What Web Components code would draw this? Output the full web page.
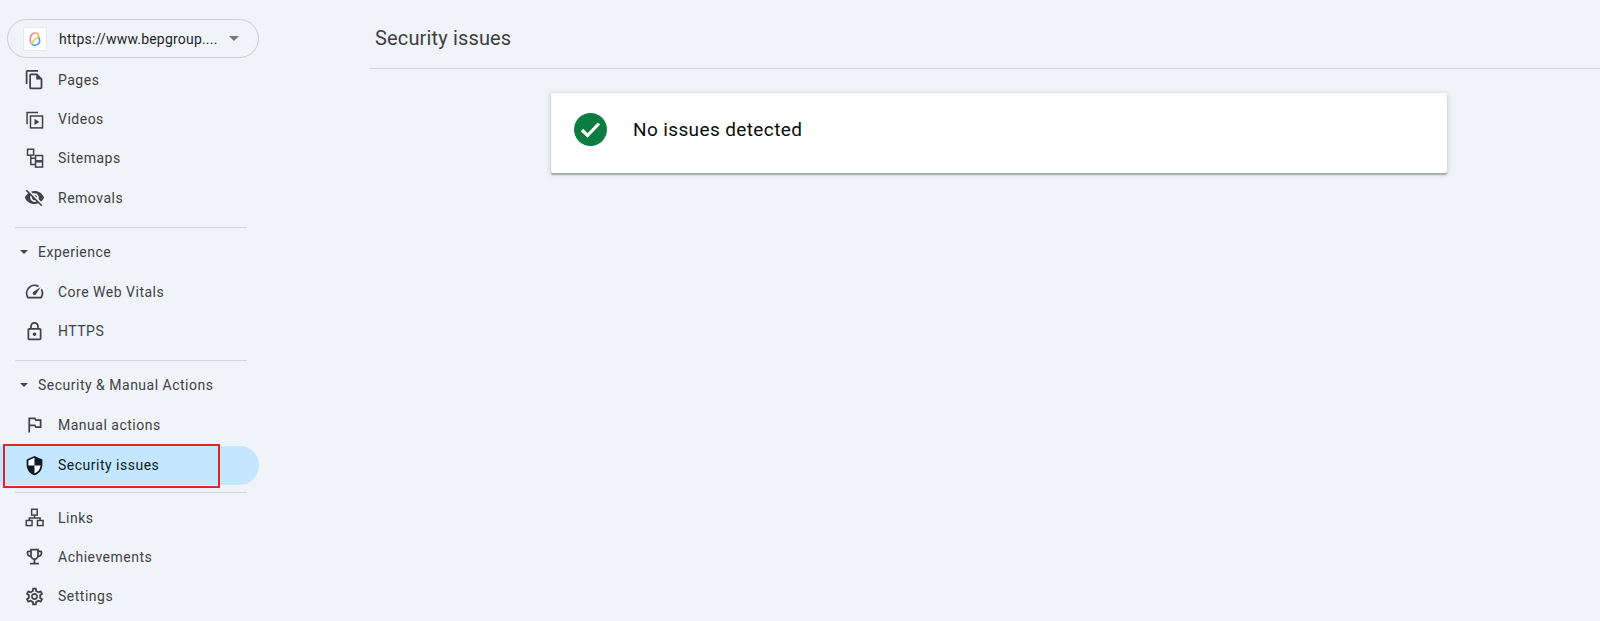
<!DOCTYPE html>
<html>
<head>
<meta charset="utf-8">
<title>Security issues</title>
<style>
  html, body { margin: 0; height: 100%; }
  body { background: #f0f4f9; font-family: Roboto, "Liberation Sans", sans-serif; overflow: hidden; }
</style>
</head>
<body>
<console-page>
  <side-nav slot="side">
    <site-picker>https://www.bepgroup....</site-picker>
    <nav-item icon="pages">Pages</nav-item>
    <nav-item icon="videos">Videos</nav-item>
    <nav-item icon="sitemaps">Sitemaps</nav-item>
    <nav-item icon="removals">Removals</nav-item>
    <nav-rule></nav-rule>
    <nav-heading>Experience</nav-heading>
    <nav-item icon="vitals">Core Web Vitals</nav-item>
    <nav-item icon="https">HTTPS</nav-item>
    <nav-rule></nav-rule>
    <nav-heading>Security &amp; Manual Actions</nav-heading>
    <nav-item icon="manual">Manual actions</nav-item>
    <nav-item icon="security" active>Security issues</nav-item>
    <nav-rule></nav-rule>
    <nav-item icon="links">Links</nav-item>
    <nav-item icon="achievements">Achievements</nav-item>
    <nav-item icon="settings">Settings</nav-item>
  </side-nav>
  <page-title>Security issues</page-title>
  <status-card>No issues detected</status-card>
</console-page>
<script>
const LINE = 'fill="none" stroke="currentColor" stroke-width="1.7"';
const ICONS = {
  pages: '<path d="M16 1H4c-1.1 0-2 .9-2 2v14h2V3h12V1zm-1 4H8c-1.1 0-1.99.9-1.99 2L6 21c0 1.1.89 2 1.99 2H19c1.1 0 2-.9 2-2V11l-6-6zM8 21V7h6v5h5v9H8z"/>',
  videos: `<path ${LINE} d="M16 4H3.5v13.5"/><rect ${LINE} x="7.4" y="8" width="13.8" height="13.6"/><path d="M12 11.2v7.2l5.6-3.6z"/>`,
  sitemaps: `<rect ${LINE} x="4" y="1.4" width="7" height="6.8"/><rect ${LINE} x="13.2" y="8.6" width="8" height="6"/><rect ${LINE} x="13.2" y="15.8" width="8" height="6"/><path ${LINE} d="M7.8 8.2v10.6h5.4M7.8 11.6h5.4"/>`,
  removals: '<path d="M12 7c2.76 0 5 2.24 5 5 0 .65-.13 1.26-.36 1.83l2.92 2.92c1.51-1.26 2.7-2.89 3.43-4.75-1.73-4.39-6-7.5-11-7.5-1.4 0-2.74.25-3.98.7l2.16 2.16C10.74 7.13 11.35 7 12 7zM2 4.27l2.28 2.28.46.46C3.08 8.3 1.78 10.02 1 12c1.73 4.39 6 7.5 11 7.5 1.55 0 3.03-.3 4.38-.84l.42.42L19.73 22 21 20.73 3.27 3 2 4.27zM7.53 9.8l1.55 1.55c-.05.21-.08.43-.08.65 0 1.66 1.34 3 3 3 .22 0 .44-.03.65-.08l1.55 1.55c-.67.33-1.41.53-2.2.53-2.76 0-5-2.24-5-5 0-.79.2-1.53.53-2.2zm4.31-.78l3.15 3.15.02-.16c0-1.66-1.34-3-3-3l-.17.01z"/>',
  vitals: '<path d="M20.38 8.57l-1.23 1.85a8 8 0 0 1-.22 7.58H5.07A8 8 0 0 1 15.58 6.85l1.85-1.23A10 10 0 0 0 3.35 19a2 2 0 0 0 1.72 1h13.85a2 2 0 0 0 1.74-1 10 10 0 0 0-.27-10.44zm-9.79 6.84a2 2 0 0 0 2.83 0l5.66-8.49-8.49 5.66a2 2 0 0 0 0 2.83z"/>',
  https: '<path d="M18 8h-1V6c0-2.76-2.24-5-5-5S7 3.24 7 6v2H6c-1.1 0-2 .9-2 2v10c0 1.1.9 2 2 2h12c1.1 0 2-.9 2-2V10c0-1.1-.9-2-2-2zM9 6c0-1.66 1.34-3 3-3s3 1.34 3 3v2H9V6zm9 14H6V10h12v10zm-6-3c1.1 0 2-.9 2-2s-.9-2-2-2-2 .9-2 2 .9 2 2 2z"/>',
  manual: '<path d="M14 6l-1-2H5v17h2v-7h5l1 2h7V6h-6zm4 8h-4l-1-2H7V6h5l1 2h5v6z"/>',
  security: '<path fill="#fff" d="M12 2L4 5.5V11c0 5 3.4 9.7 8 11 4.6-1.3 8-6 8-11V5.5z"/><path d="M12 1L3 5v6c0 5.55 3.84 10.74 9 12 5.16-1.26 9-6.45 9-12V5l-9-4zm0 10.99h7c-.53 4.12-3.28 7.79-7 8.94V12H5V6.3l7-3.11v8.8z"/>',
  links: `<rect ${LINE} x="8.7" y="2.6" width="6.4" height="6.6"/><rect ${LINE} x="2.6" y="15.4" width="6.6" height="5.8"/><rect ${LINE} x="15.4" y="15.4" width="6.4" height="5.8"/><path ${LINE} d="M12 9.2v3.4M6 15.4v-2.8h12.4v2.8"/>`,
  achievements: '<path d="M19 5h-2V3H7v2H5c-1.1 0-2 .9-2 2v1c0 2.55 1.92 4.63 4.39 4.94A5.01 5.01 0 0 0 11 15.9V19H7v2h10v-2h-4v-3.1a5.01 5.01 0 0 0 3.61-2.96C19.08 12.63 21 10.55 21 8V7c0-1.1-.9-2-2-2zM5 8V7h2v3.82C5.84 10.4 5 9.3 5 8zm7 6c-1.65 0-3-1.35-3-3V5h6v6c0 1.65-1.35 3-3 3zm7-6c0 1.3-.84 2.4-2 2.82V7h2v1z"/>',
  settings: '<path d="M19.43 12.98c.04-.32.07-.64.07-.98 0-.34-.03-.66-.07-.98l2.11-1.65c.19-.15.24-.42.12-.64l-2-3.46c-.09-.16-.26-.25-.44-.25-.06 0-.12.01-.17.03l-2.49 1c-.52-.4-1.08-.73-1.69-.98l-.38-2.65C14.46 2.18 14.25 2 14 2h-4c-.25 0-.46.18-.49.42l-.38 2.65c-.61.25-1.17.59-1.69.98l-2.49-1c-.06-.02-.12-.03-.18-.03-.17 0-.34.09-.43.25l-2 3.46c-.13.22-.07.49.12.64l2.11 1.65c-.04.32-.07.65-.07.98 0 .33.03.66.07.98l-2.11 1.65c-.19.15-.24.42-.12.64l2 3.46c.09.16.26.25.44.25.06 0 .12-.01.17-.03l2.49-1c.52.4 1.08.73 1.69.98l.38 2.65c.03.24.24.42.49.42h4c.25 0 .46-.18.49-.42l.38-2.65c.61-.25 1.17-.59 1.69-.98l2.49 1c.06.02.12.03.18.03.17 0 .34-.09.43-.25l2-3.46c.12-.22.07-.49-.12-.64l-2.11-1.65zm-1.98-1.71c.04.31.05.52.05.73 0 .21-.02.43-.05.73l-.14 1.13.89.7 1.08.84-.7 1.21-1.27-.51-1.04-.42-.9.68c-.43.32-.84.56-1.25.73l-1.06.43-.16 1.13-.2 1.35h-1.4l-.19-1.35-.16-1.13-1.06-.43c-.43-.18-.83-.41-1.23-.71l-.91-.7-1.06.43-1.27.51-.7-1.21 1.08-.84.89-.7-.14-1.13c-.03-.31-.05-.54-.05-.74s.02-.43.05-.73l.14-1.13-.89-.7-1.08-.84.7-1.21 1.27.51 1.04.42.9-.68c.43-.32.84-.56 1.25-.73l1.06-.43.16-1.13.2-1.35h1.39l.19 1.35.16 1.13 1.06.43c.43.18.83.41 1.23.71l.91.7 1.06-.43 1.27-.51.7 1.21-1.07.85-.89.7.14 1.13zM12 8c-2.21 0-4 1.79-4 4s1.79 4 4 4 4-1.79 4-4-1.79-4-4-4zm0 6c-1.1 0-2-.9-2-2s.9-2 2-2 2 .9 2 2-.9 2-2 2z"/>'
};

class ConsolePage extends HTMLElement {
  constructor() {
    super();
    this.shadowDOM = this.attachShadow({ mode: "open" });
    this.shadowDOM.innerHTML = `
      <style>
        :host { display: flex; height: 621px; }
        .side { flex: 0 0 263px; box-sizing: border-box; padding-top: 19px; }
        .main { flex: 1; min-width: 0; padding-left: 108px; }
      </style>
      <div class="side"><slot name="side"></slot></div>
      <div class="main"><slot></slot></div>`;
  }
}

class SideNav extends HTMLElement {
  constructor() {
    super();
    this.shadowDOM = this.attachShadow({ mode: "open" });
    this.shadowDOM.innerHTML = `
      <style>
        :host { display: flex; flex-direction: column; }
      </style>
      <slot></slot>`;
  }
}

class SitePicker extends HTMLElement {
  constructor() {
    super();
    this.shadowDOM = this.attachShadow({ mode: "open" });
    this.shadowDOM.innerHTML = `
      <style>
        :host {
          display: flex; align-items: center; box-sizing: border-box;
          height: 39px; width: 252px; margin: 0 0 2px 7px; padding-left: 16px;
          border: 1px solid #c9cdd0; border-radius: 20px;
          font-size: 14px; color: #1f1f1f; letter-spacing: .2px;
        }
        .logo {
          width: 22px; height: 22px; flex: none; background: #fff; margin-right: 13px;
          box-shadow: 0 0 1px rgba(0,0,0,.25); display: flex; align-items: center; justify-content: center;
        }
        .label { flex: 1; white-space: nowrap; }
        .arrow { width: 0; height: 0; margin-right: 19px; border: 5px solid transparent; border-top-color: #747775; border-bottom: 0; }
      </style>
      <span class="logo">
        <svg width="12" height="14" viewBox="0 0 12 14" fill="none" stroke-width="1.5">
          <path d="M6.5 1C3.5 1 1.5 3.5 1.2 7 1 9 1.4 10.8 2.6 12" stroke="#ff6fa8"/>
          <path d="M6.5 1C9 .8 10 3 9.4 5.2" stroke="#f8a93b"/>
          <path d="M9.4 5.2C7 6 3.6 9.2 2.6 12" stroke="#f6cf45"/>
          <path d="M9.4 5.2C11 7.2 11 9.8 9.6 11.6 7.8 13.6 4.4 13.6 2.6 12" stroke="#3d9bff"/>
        </svg>
      </span>
      <span class="label"><slot></slot></span>
      <span class="arrow"></span>`;
  }
}

class NavItem extends HTMLElement {
  constructor() {
    super();
    this.shadowDOM = this.attachShadow({ mode: "open" });
  }

  connectedCallback() {
    const path = ICONS[this.getAttribute("icon")] || "";
    this.shadowDOM.innerHTML = `
      <style>
        :host {
          display: flex; align-items: center; position: relative; box-sizing: border-box;
          height: 39.4px; width: 259px; padding-left: 23.5px; border-radius: 0 20px 20px 0;
          font-size: 14px; color: #3f4244; letter-spacing: .5px;
        }
        :host([active]) { background: #c2e7ff; color: #0e1a22; margin: 1px 0 -2px; }
        svg { flex: none; width: 21px; height: 21px; margin-right: 13.5px; fill: currentColor; }
        .mark {
          display: none; position: absolute; left: 3px; top: -2px; width: 217px; height: 44px;
          box-sizing: border-box; border: 2px solid #e3241f;
        }
        :host([active]) .mark { display: block; }
      </style>
      <svg viewBox="0 0 24 24">${path}</svg>
      <slot></slot>
      <span class="mark"></span>`;
  }
}

class NavHeading extends HTMLElement {
  constructor() {
    super();
    this.shadowDOM = this.attachShadow({ mode: "open" });
    this.shadowDOM.innerHTML = `
      <style>
        :host {
          display: flex; align-items: center; height: 39.4px; padding-left: 20px;
          font-size: 14px; color: #3f4244; letter-spacing: .5px;
        }
        .arrow { width: 0; height: 0; margin-right: 10px; border: 4px solid transparent; border-top-color: #444746; border-bottom: 0; }
      </style>
      <span class="arrow"></span><slot></slot>`;
  }
}

class NavRule extends HTMLElement {
  constructor() {
    super();
    this.shadowDOM = this.attachShadow({ mode: "open" });
    this.shadowDOM.innerHTML = `
      <style>
        :host { display: block; height: 1px; width: 232px; margin: 9px 0 5px 15px; background: #d3d6d8; }
      </style>`;
  }
}

class PageTitle extends HTMLElement {
  constructor() {
    super();
    this.shadowDOM = this.attachShadow({ mode: "open" });
    this.shadowDOM.innerHTML = `
      <style>
        :host {
          display: flex; align-items: center; box-sizing: border-box; height: 69px; margin-left: -1px; padding: 8px 0 0 5px;
          border-bottom: 1px solid #d0d3d6; font-size: 20px; color: #3c4043; letter-spacing: .15px;
        }
      </style>
      <slot></slot>`;
  }
}

class StatusCard extends HTMLElement {
  constructor() {
    super();
    this.shadowDOM = this.attachShadow({ mode: "open" });
    this.shadowDOM.innerHTML = `
      <style>
        :host {
          display: flex; align-items: center; box-sizing: border-box; width: 896px; height: 80px;
          margin: 24px 0 0 180px; padding: 0 0 7px 23px; background: #fff; border-radius: 2px;
          box-shadow: 0 1px 4px 1px rgba(60,64,67,.2), 0 2px 1px rgba(60,64,67,.3);
          font-size: 19px; font-weight: 450; color: #0a0a0b; letter-spacing: .38px;
        }
        svg { flex: none; width: 33px; height: 33px; margin-right: 26px; }
      </style>
      <svg viewBox="0 0 33 33">
        <circle cx="16.5" cy="16.5" r="16.5" fill="#0c7c41"/>
        <path d="M8 17l5.5 5.5L25 10.5" fill="none" stroke="#fff" stroke-width="3.2"/>
      </svg>
      <slot></slot>`;
  }
}

customElements.define("console-page", ConsolePage);
customElements.define("side-nav", SideNav);
customElements.define("site-picker", SitePicker);
customElements.define("nav-item", NavItem);
customElements.define("nav-heading", NavHeading);
customElements.define("nav-rule", NavRule);
customElements.define("page-title", PageTitle);
customElements.define("status-card", StatusCard);
</script>
</body>
</html>
